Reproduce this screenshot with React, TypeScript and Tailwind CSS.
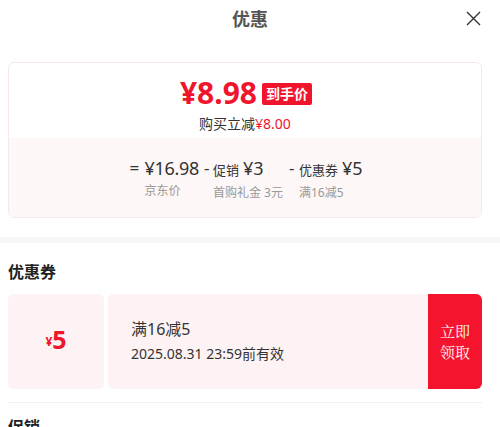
export default function App() {
  const font = { fontFamily: '"Noto Sans", "Noto Sans CJK SC", sans-serif' };

  return (
    <div className="w-[500px] h-[427px] overflow-hidden bg-white" style={font}>
      {/* Header */}
      <div className="relative h-[37px] flex items-center justify-center">
        <h1 className="text-[18px] font-bold text-[#555] leading-none">优惠</h1>
        <button className="absolute right-[19px] top-[11px] text-[#333]">
          <svg width="15" height="15" viewBox="0 0 15 15" fill="none" stroke="currentColor" strokeWidth="1.4">
            <path d="M1 1L14 14M14 1L1 14" />
          </svg>
        </button>
      </div>

      {/* Price card */}
      <div className="mx-[8px] mt-[25px] w-[474px] h-[156px] rounded-[6px] border border-[#f5e8ea] overflow-hidden flex flex-col">
        <div className="h-[75px] flex flex-col items-center pt-[15px]">
          <div className="flex items-center gap-[5px] h-[30px] ml-[2px]">
            <span className="text-[#f0142d] font-bold text-[30px] leading-none">¥8.98</span>
            <span className="bg-[#f0142d] text-white text-[14px] font-bold leading-none px-[4px] py-[4px] rounded-[2px] mt-[1px]">
              到手价
            </span>
          </div>
          <div className="mt-[6px] text-[14px] text-[#333] leading-[20px]">
            购买立减<span className="text-[#f0142d]">¥8.00</span>
          </div>
        </div>
        <div className="flex-1 bg-[#fdf7f8] flex justify-center pt-[18px] pl-[2px]">
          <div className="flex text-[#333]">
            <span className="text-[17px] leading-[24px] w-[15px]">=</span>
            <div className="flex flex-col">
              <span className="text-[18px] leading-[24px] tracking-[-0.3px]">¥16.98</span>
              <span className="text-[12px] text-[#999] leading-[16px] mt-[3px]">京东价</span>
            </div>
            <span className="text-[17px] leading-[24px] ml-[5px] w-[9px]">-</span>
            <div className="flex flex-col">
              <span className="leading-[24px]">
                <span className="text-[13px]">促销</span>
                <span className="text-[18px] ml-[4px]">¥3</span>
              </span>
              <span className="text-[12px] text-[#999] leading-[16px] mt-[3px]">首购礼金 3元</span>
            </div>
            <span className="text-[17px] leading-[24px] ml-[6px] w-[10px]">-</span>
            <div className="flex flex-col">
              <span className="leading-[24px]">
                <span className="text-[13px]">优惠券</span>
                <span className="text-[18px] ml-[4px]">¥5</span>
              </span>
              <span className="text-[12px] text-[#999] leading-[16px] mt-[3px]">满16减5</span>
            </div>
          </div>
        </div>
      </div>

      {/* Divider band */}
      <div className="mt-[19px] h-[6px] bg-[#f6f6f9]" />

      {/* Coupons */}
      <div className="pl-[8px] pr-[18px]">
        <h2 className="mt-[19px] text-[16px] font-bold text-[#222] leading-[20px]">优惠券</h2>
        <div className="mt-[12px] flex h-[95px]">
          <div className="w-[96px] bg-[#fdf3f4] rounded-[5px] flex items-center justify-center text-[#f0142d] font-bold pb-[5px]">
            <span className="text-[12px] mt-[6px]">¥</span>
            <span className="text-[25px] leading-none">5</span>
          </div>
          <div className="ml-[4px] flex-1 bg-[#fdf3f4] rounded-l-[5px] flex flex-col justify-center pl-[23px] pb-[2px]">
            <span className="text-[16px] text-[#333] leading-[24px]">满16减5</span>
            <span className="text-[14px] text-[#333] leading-[22px] mt-[2px]">2025.08.31 23:59前有效</span>
          </div>
          <button
            className="w-[54px] bg-[#f5142d] rounded-r-[6px] text-white text-[15px] leading-[20px] flex flex-col items-center justify-center gap-[1px]"
            style={{ fontFamily: '"Noto Serif CJK SC", serif' }}
          >
            <span>立即</span>
            <span>领取</span>
          </button>
        </div>
        <div className="mt-[13px] h-px bg-[#f2f2f2]" />
        <h2 className="mt-[14px] text-[16px] font-bold text-[#222] leading-[20px]">促销</h2>
      </div>
    </div>
  );
}
